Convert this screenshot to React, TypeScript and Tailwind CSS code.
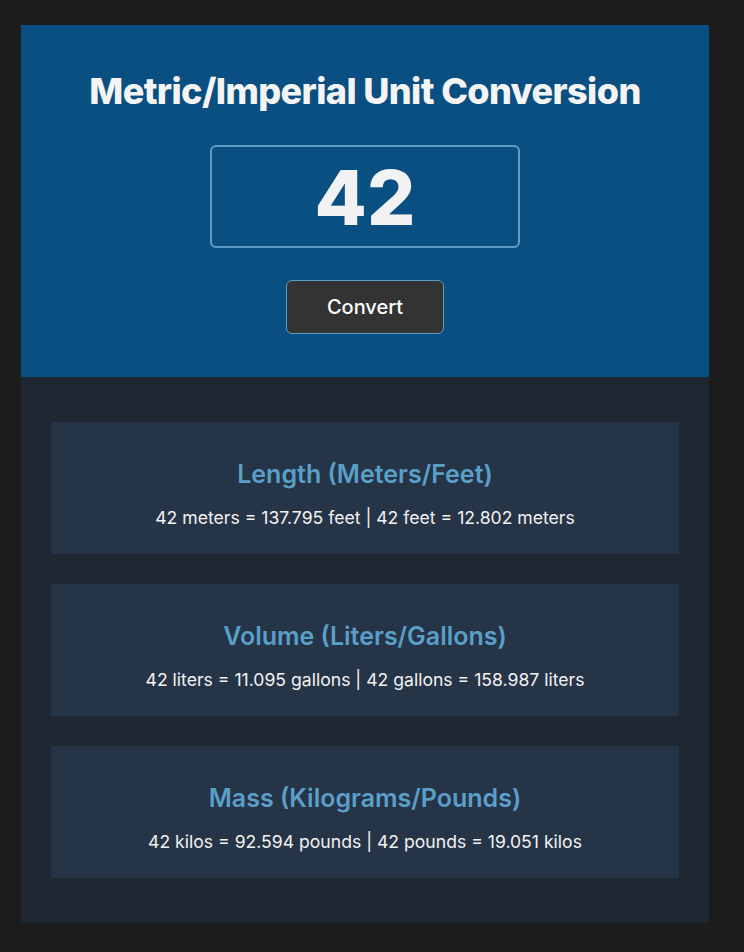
import React, { useState } from 'react';

const conversions = [
    { title: 'Length (Meters/Feet)', metric: 'meters', imperial: 'feet', factor: 3.28084 },
    { title: 'Volume (Liters/Gallons)', metric: 'liters', imperial: 'gallons', factor: 0.264172 },
    { title: 'Mass (Kilograms/Pounds)', metric: 'kilos', imperial: 'pounds', factor: 2.20462 },
];

const App: React.FC = () => {
    const [value, setValue] = useState('42');
    const [num, setNum] = useState(42);

    return (
        <div className="min-h-screen bg-[#1c1c1c] px-[21px] pt-[25px] pb-[29px] font-['Inter',sans-serif] antialiased">
            <div className="w-[688px]">
                {/* Header */}
                <div className="bg-[#0a4f82] pt-[46px] pb-[43px] flex flex-col items-center">
                    <h1 className="text-[36px] leading-[41px] font-extrabold text-[#f4f4f4] tracking-[-0.6px]">
                        Metric/Imperial Unit Conversion
                    </h1>
                    <input
                        value={value}
                        onChange={(e) => setValue(e.target.value)}
                        className="mt-[33px] w-[310px] h-[103px] bg-transparent border-2 border-[#5f9dc4] rounded-md text-center text-[76px] font-extrabold text-[#f2f2f2] outline-none"
                    />
                    <button
                        onClick={() => setNum(Number(value) || 0)}
                        className="mt-[32px] w-[158px] h-[54px] bg-[#333333] border border-[#5f9dc4] rounded-md text-[20px] font-medium text-white"
                    >
                        Convert
                    </button>
                </div>

                {/* Results */}
                <div className="bg-[#1f2733] px-[30px] py-[45px] flex flex-col gap-[30px]">
                    {conversions.map((c) => (
                        <div key={c.title} className="bg-[#263447] h-[132px] flex flex-col items-center pt-[37px]">
                            <h2 className="text-[25px] leading-[30px] font-semibold text-[#5a9fc8]">{c.title}</h2>
                            <p className="mt-[17px] text-[17.6px] leading-[24px] text-[#f2f2f2]">
                                {num} {c.metric} = {(num * c.factor).toFixed(3)} {c.imperial} | {num} {c.imperial} = {(num / c.factor).toFixed(3)} {c.metric}
                            </p>
                        </div>
                    ))}
                </div>
            </div>
        </div>
    );
};

export default App;
